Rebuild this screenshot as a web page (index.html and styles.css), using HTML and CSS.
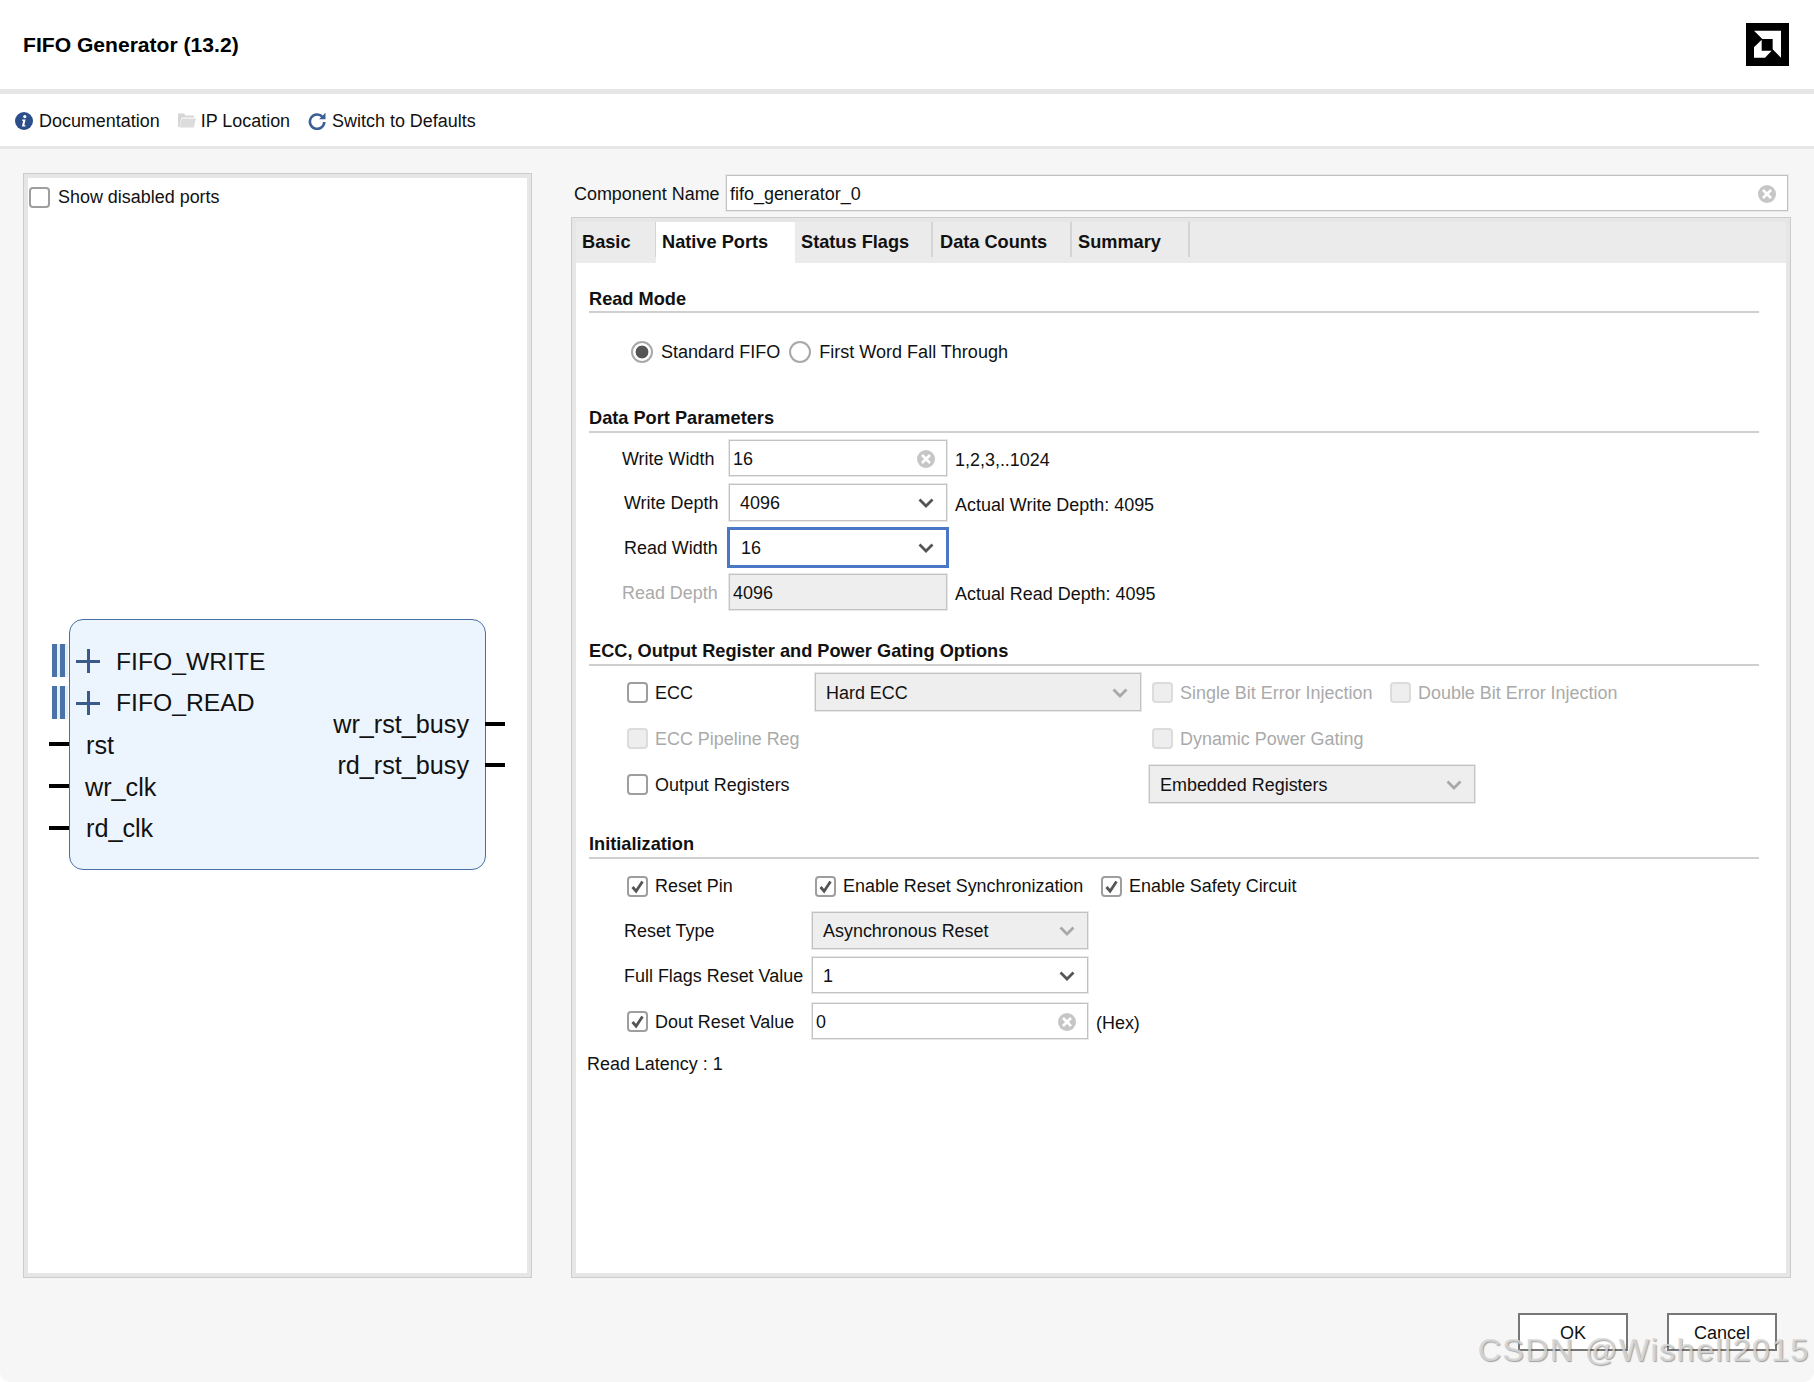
FILE: index.html
```html
<!DOCTYPE html>
<html lang="en">
<head>
<meta charset="utf-8">
<title>FIFO Generator (13.2)</title>
<link rel="stylesheet" href="styles.css">
</head>
<body>
<svg class="defs" width="0" height="0" aria-hidden="true">
  <symbol id="i-clear" viewBox="0 0 18 18"><circle cx="9" cy="9" r="9" fill="#c6c6c6"/><path d="M5 5l8 8M13 5l-8 8" stroke="#fff" stroke-width="2.6" fill="none"/></symbol>
  <symbol id="i-chev" viewBox="0 0 16 10"><path d="M1.5 1.5L8 8l6.5-6.5" stroke="currentColor" stroke-width="2.8" fill="none"/></symbol>
  <symbol id="i-check" viewBox="0 0 17 17"><path d="M3.5 9l3.6 4.2L13.5 3.5" stroke="#555" stroke-width="2.8" fill="none"/></symbol>
</svg>
<div class="window">
  <header class="header">
    <div class="title">FIFO Generator (13.2)</div>
    <svg class="logo" viewBox="0 0 129 129"><rect width="129" height="129" fill="#000"/><path fill="#fff" d="M24 23H105V104L80 79V48H49Z"/><path fill="#fff" d="M47 50L24 73V104H57L77 83H47Z"/></svg>
  </header>
  <nav class="toolbar">
    <div class="tool">
      <svg class="tool-icon" viewBox="0 0 18 18"><circle cx="9" cy="9" r="9" fill="#2c4f8c"/><circle cx="9.8" cy="4.6" r="1.6" fill="#fff"/><path d="M7.2 7.6h3.4l-1.3 5.6h1.3l-.3 1.2H6.9l1.3-5.6H7z" fill="#fff"/></svg>
      <span>Documentation</span>
    </div>
    <div class="tool tool-folder">
      <svg class="tool-icon" viewBox="0 0 18 18"><path d="M0 1.5h6l1.5 2H16v2H3.5L1.4 15H0z" fill="#d6d6d6"/><path d="M3.8 6.6H18L15.8 15.5H1.6z" fill="#dcdcdc"/></svg>
      <span>IP Location</span>
    </div>
    <div class="tool">
      <svg class="tool-icon" viewBox="0 0 18 18"><path d="M14.6 5A7.2 7.2 0 1 0 16.3 10" stroke="#3c5f97" stroke-width="2.6" fill="none"/><path d="M17.5 .8v6.4h-6.4z" fill="#3c5f97"/></svg>
      <span>Switch to Defaults</span>
    </div>
  </nav>
  <main class="main">
    <section class="panel left-panel">
      <div class="panel-inner schematic-area">
        <label class="show-ports"><span class="box"></span>Show disabled ports</label>
        <div class="schematic">
          <div class="block"></div>
          <span class="bus bus-a"></span>
          <span class="bus bus-b"></span>
          <span class="plus plus-a"></span>
          <span class="plus plus-b"></span>
          <span class="pin pin-l pin-1"></span>
          <span class="pin pin-l pin-2"></span>
          <span class="pin pin-l pin-3"></span>
          <span class="pin pin-r pin-4"></span>
          <span class="pin pin-r pin-5"></span>
          <span class="port port-1">FIFO_WRITE</span>
          <span class="port port-2">FIFO_READ</span>
          <span class="port port-lc port-3">rst</span>
          <span class="port port-lc port-4">wr_clk</span>
          <span class="port port-lc port-5">rd_clk</span>
          <span class="port port-lc port-6">wr_rst_busy</span>
          <span class="port port-lc port-7">rd_rst_busy</span>
        </div>
      </div>
    </section>
    <div class="side">
      <div class="component-row">
        <span class="component-label">Component Name</span>
        <div class="field component-field low"><span>fifo_generator_0</span><svg class="clear"><use href="#i-clear"/></svg></div>
      </div>
      <section class="panel right-panel">
        <div class="panel-inner">
          <div class="tabs">
            <div class="tab tab-basic">Basic</div>
            <div class="tab tab-native">Native Ports</div>
            <div class="tab tab-status">Status Flags</div>
            <div class="tab tab-data">Data Counts</div>
            <div class="tab tab-summary">Summary</div>
          </div>
          <div class="content">
            <h3 class="heading h-read">Read Mode</h3>
            <div class="radio-row">
              <span class="radio radio-on"></span><span class="radio-text">Standard FIFO</span>
              <span class="radio"></span><span>First Word Fall Through</span>
            </div>

            <h3 class="heading h-data">Data Port Parameters</h3>
            <div class="param r-ww">
              <span class="param-label pl-33 low">Write Width</span>
              <div class="field f-218 low"><span>16</span><svg class="clear"><use href="#i-clear"/></svg></div>
              <span class="hint">1,2,3,..1024</span>
            </div>
            <div class="param r-wd">
              <span class="param-label pl-35">Write Depth</span>
              <div class="field select f-218 h-37"><span>4096</span><svg class="chev"><use href="#i-chev"/></svg></div>
              <span class="hint">Actual Write Depth: 4095</span>
            </div>
            <div class="param r-rw">
              <span class="param-label pl-35">Read Width</span>
              <div class="field select focus"><span>16</span><svg class="chev"><use href="#i-chev"/></svg></div>
            </div>
            <div class="param r-rd">
              <span class="param-label pl-33 muted low">Read Depth</span>
              <div class="field f-218 readonly low"><span>4096</span></div>
              <span class="hint">Actual Read Depth: 4095</span>
            </div>

            <h3 class="heading h-ecc">ECC, Output Register and Power Gating Options</h3>
            <div class="row row-ecc">
              <label class="check w-188"><span class="box"></span>ECC</label>
              <div class="field select disabled w-326 h-38 low"><span>Hard ECC</span><svg class="chev chev-off"><use href="#i-chev"/></svg></div>
              <label class="check muted w-238 ml-11"><span class="box box-off"></span>Single Bit Error Injection</label>
              <label class="check muted"><span class="box box-off"></span>Double Bit Error Injection</label>
            </div>
            <div class="row row-pipe">
              <label class="check muted w-525"><span class="box box-off"></span>ECC Pipeline Reg</label>
              <label class="check muted"><span class="box box-off"></span>Dynamic Power Gating</label>
            </div>
            <div class="row row-out">
              <label class="check w-522"><span class="box"></span>Output Registers</label>
              <div class="field select disabled w-326 h-38 low"><span>Embedded Registers</span><svg class="chev chev-off"><use href="#i-chev"/></svg></div>
            </div>

            <h3 class="heading h-init">Initialization</h3>
            <div class="row row-reset">
              <label class="check w-188"><span class="box"><svg class="tick"><use href="#i-check"/></svg></span>Reset Pin</label>
              <label class="check w-286"><span class="box"><svg class="tick"><use href="#i-check"/></svg></span>Enable Reset Synchronization</label>
              <label class="check"><span class="box"><svg class="tick"><use href="#i-check"/></svg></span>Enable Safety Circuit</label>
            </div>
            <div class="row row-type">
              <span class="init-label">Reset Type</span>
              <div class="field select disabled w-276 h-37"><span>Asynchronous Reset</span><svg class="chev chev-off"><use href="#i-chev"/></svg></div>
            </div>
            <div class="row row-full">
              <span class="init-label low">Full Flags Reset Value</span>
              <div class="field select w-276 low"><span>1</span><svg class="chev"><use href="#i-chev"/></svg></div>
            </div>
            <div class="row row-dout">
              <label class="check w-185"><span class="box"><svg class="tick"><use href="#i-check"/></svg></span>Dout Reset Value</label>
              <div class="field w-276 low"><span>0</span><svg class="clear"><use href="#i-clear"/></svg></div>
              <span class="hint">(Hex)</span>
            </div>
            <div class="latency">Read Latency : 1</div>
          </div>
        </div>
      </section>
    </div>
  </main>
  <footer class="footer">
    <button class="btn" type="button">OK</button>
    <button class="btn" type="button">Cancel</button>
    <span class="watermark">CSDN @Wishell2015</span>
  </footer>
</div>
</body>
</html>
```
FILE: styles.css
```css
* { box-sizing: border-box; }
html, body { margin: 0; padding: 0; background: #fff; }
body { font-family: "Liberation Sans", Arial, sans-serif; font-size: 17.95px; line-height: 24px; color: #111; }
.defs { position: absolute; }

.window { position: relative; width: 1814px; height: 1382px; display: flex; flex-direction: column; background: #f6f6f6; border-radius: 0 0 10px 10px; overflow: hidden; }

.header { height: 94px; flex: none; display: flex; align-items: flex-start; justify-content: space-between; padding: 23px 25px 0 23px; background: #fff; border-bottom: 5px solid #e6e6e6; }
.title { font-size: 21.1px; font-weight: 700; line-height: 44px; color: #000; }
.logo { width: 43px; height: 43px; display: block; }

.toolbar { height: 55px; flex: none; display: flex; align-items: center; padding: 2px 0 0 15px; background: #fff; border-bottom: 3px solid #e6e6e6; }
.tool { display: flex; align-items: center; gap: 6px; margin-right: 18px; }
.tool-folder { gap: 5px; }
.tool-icon { width: 18px; height: 18px; display: block; flex: none; }

.main { flex: none; height: 1129px; display: flex; gap: 39px; padding: 24px 0 0 23px; }
.panel { border: 1px solid #cccccc; background: #e6e6e6; padding: 4px; }
.panel-inner { background: #fff; height: 100%; }
.left-panel { width: 509px; height: 1105px; }
.schematic-area { position: relative; }

.show-ports { display: flex; align-items: center; gap: 8px; padding: 7px 0 0 1px; }
.box { width: 21px; height: 21px; flex: none; display: block; border: 2px solid #9e9e9e; border-radius: 4px; background: #fff; }
.box-off { border-color: #dcdcdc; background: #eeeeee; }
.tick { width: 17px; height: 17px; display: block; }

.schematic { position: absolute; inset: 0; font-size: 24.7px; }
.block { position: absolute; left: 41px; top: 441px; width: 417px; height: 251px; background: #ecf4fe; border: 1px solid #4a6fa5; border-radius: 14px; }
.bus { position: absolute; left: 24px; width: 16px; height: 33px; background: linear-gradient(90deg, #4a74a8 0 5px, #e6eef8 5px 8px, #4a74a8 8px 13px, #e6eef8 13px); }
.bus-a { top: 466px; }
.bus-b { top: 508px; }
.plus { position: absolute; left: 48px; width: 24px; height: 24px; background: linear-gradient(#3a5a8c, #3a5a8c) center / 24px 3px no-repeat, linear-gradient(#3a5a8c, #3a5a8c) center / 3px 24px no-repeat; }
.plus-a { top: 471px; }
.plus-b { top: 513px; }
.pin { position: absolute; height: 4px; width: 20px; background: #000; }
.pin-l { left: 21px; }
.pin-r { left: 457px; }
.pin-1 { top: 564px; }
.pin-2 { top: 606px; }
.pin-3 { top: 648px; }
.pin-4 { top: 544px; }
.pin-5 { top: 585px; }
.port { position: absolute; line-height: 30px; white-space: nowrap; }
.port-lc { font-size: 25.2px; }
.port-1 { left: 88px; top: 469px; }
.port-2 { left: 88px; top: 510px; }
.port-3 { left: 58px; top: 552px; }
.port-4 { left: 57px; top: 594px; }
.port-5 { left: 58px; top: 635px; }
.port-6 { right: 58px; top: 531px; }
.port-7 { right: 58px; top: 572px; }

.side { width: 1220px; flex: none; }
.component-row { display: flex; align-items: center; height: 36px; margin: 2px 0 6px; padding-left: 3px; }
.component-label { width: 152px; flex: none; padding-top: 2px; }
.component-field { width: 1062px; padding-left: 3px; }
.right-panel { height: 1061px; }

.field { position: relative; display: flex; align-items: center; justify-content: space-between; height: 36px; flex: none; padding: 0 11px 0 3px; background: #fff; border: 1px solid #c2c2c2; box-shadow: 0 0 0 1px #e8e8e8; }
.low { padding-top: 2px; }
.select { padding-left: 10px; padding-right: 12px; }
.select.focus { width: 222px; height: 41px; margin-left: -2px; padding-left: 11px; border: 3px solid #4a78c6; box-shadow: none; }
.disabled { background: #eeeeee; }
.readonly { background: #eeeeee; }
.clear { width: 18px; height: 18px; display: block; flex: none; }
.chev { width: 16px; height: 10px; display: block; flex: none; color: #555; }
.chev-off { color: #a8a8a8; }

.tabs { display: flex; height: 41px; background: #ebebeb; font-weight: 700; font-size: 18.2px; }
.tab { padding-left: 6px; line-height: 40px; position: relative; height: 35px; border-right: 2px solid #d4d4d4; }
.tab-basic { width: 81px; }
.tab-native { width: 139px; height: 41px; background: #fff; border-right: 0; margin-left: -1px; }
.tab-status { width: 138px; }
.tab-data { width: 139px; padding-left: 7px; }
.tab-summary { width: 118px; }

.content { padding: 0 27px 0 13px; }
.heading { margin: 0; height: 27px; font-size: 18.2px; line-height: 24px; font-weight: 700; border-bottom: 2px solid #cfcfcf; }
.h-read { margin-top: 23px; line-height: 26px; }
.h-data { margin-top: 36px; }
.h-ecc { margin-top: 29px; }
.h-init { margin-top: 29px; }

.radio-row { display: flex; align-items: center; height: 36px; margin-top: 21px; padding-left: 42px; font-size: 18.05px; }
.radio { width: 22px; height: 22px; flex: none; border: 2px solid #a8a8a8; border-radius: 50%; background: #fff; margin-right: 8px; position: relative; }
.radio-on { background: radial-gradient(circle, #555 0 6px, #fff 6.8px); }
.radio-text { margin-right: 9px; }

.param { display: flex; align-items: center; }
.param-label { width: 140px; flex: none; }
.pl-33 { padding-left: 33px; }
.pl-35 { padding-left: 35px; }
.muted { color: #aaaaaa; }
.f-218 { width: 218px; }
.h-37 { height: 37px; }
.h-38 { height: 38px; }
.hint { margin: 4px 0 0 8px; }
.r-ww { margin-top: 7px; }
.r-wd { margin-top: 8px; }
.r-rw { margin-top: 6px; }
.r-rd { margin-top: 6px; }

.row { display: flex; align-items: center; padding-left: 38px; }
.check { display: flex; align-items: center; gap: 7px; flex: none; white-space: nowrap; padding-top: 2px; }
.check .box { margin-top: -2px; }
.row-reset .check { padding-top: 0; }
.row-reset .check .box { margin-top: 0; }
.w-185 { width: 185px; }
.w-188 { width: 188px; }
.w-238 { width: 238px; }
.w-276 { width: 276px; }
.w-286 { width: 286px; }
.w-326 { width: 326px; }
.w-522 { width: 522px; }
.w-525 { width: 525px; }
.ml-11 { margin-left: 11px; }
.row-ecc { margin-top: 7px; }
.row-pipe { margin-top: 9px; height: 36px; }
.row-out { margin-top: 9px; }
.row-reset { margin-top: 12px; height: 30px; }
.row-type { margin-top: 11px; padding-left: 35px; }
.row-full { margin-top: 8px; padding-left: 35px; }
.row-dout { margin-top: 10px; }
.init-label { width: 188px; flex: none; white-space: nowrap; }
.latency { margin: 13px 0 0 -2px; }

.footer { position: relative; flex: 1; display: flex; justify-content: flex-end; gap: 39px; padding: 35px 37px 0 0; }
.btn { width: 110px; height: 38px; padding: 2px 0 0; font: 18px/24px "Liberation Sans", Arial, sans-serif; color: #111; background: #fff; border: 2px solid #777; border-radius: 0; }
.watermark { position: absolute; left: 1478px; top: 54px; font-size: 32px; line-height: 36px; letter-spacing: 1.5px; white-space: nowrap; color: rgba(225, 225, 225, .8); text-shadow: -.5px -.5px 0 rgba(0, 0, 0, .12), 1px 1px 1px rgba(0, 0, 0, .35); }
```
